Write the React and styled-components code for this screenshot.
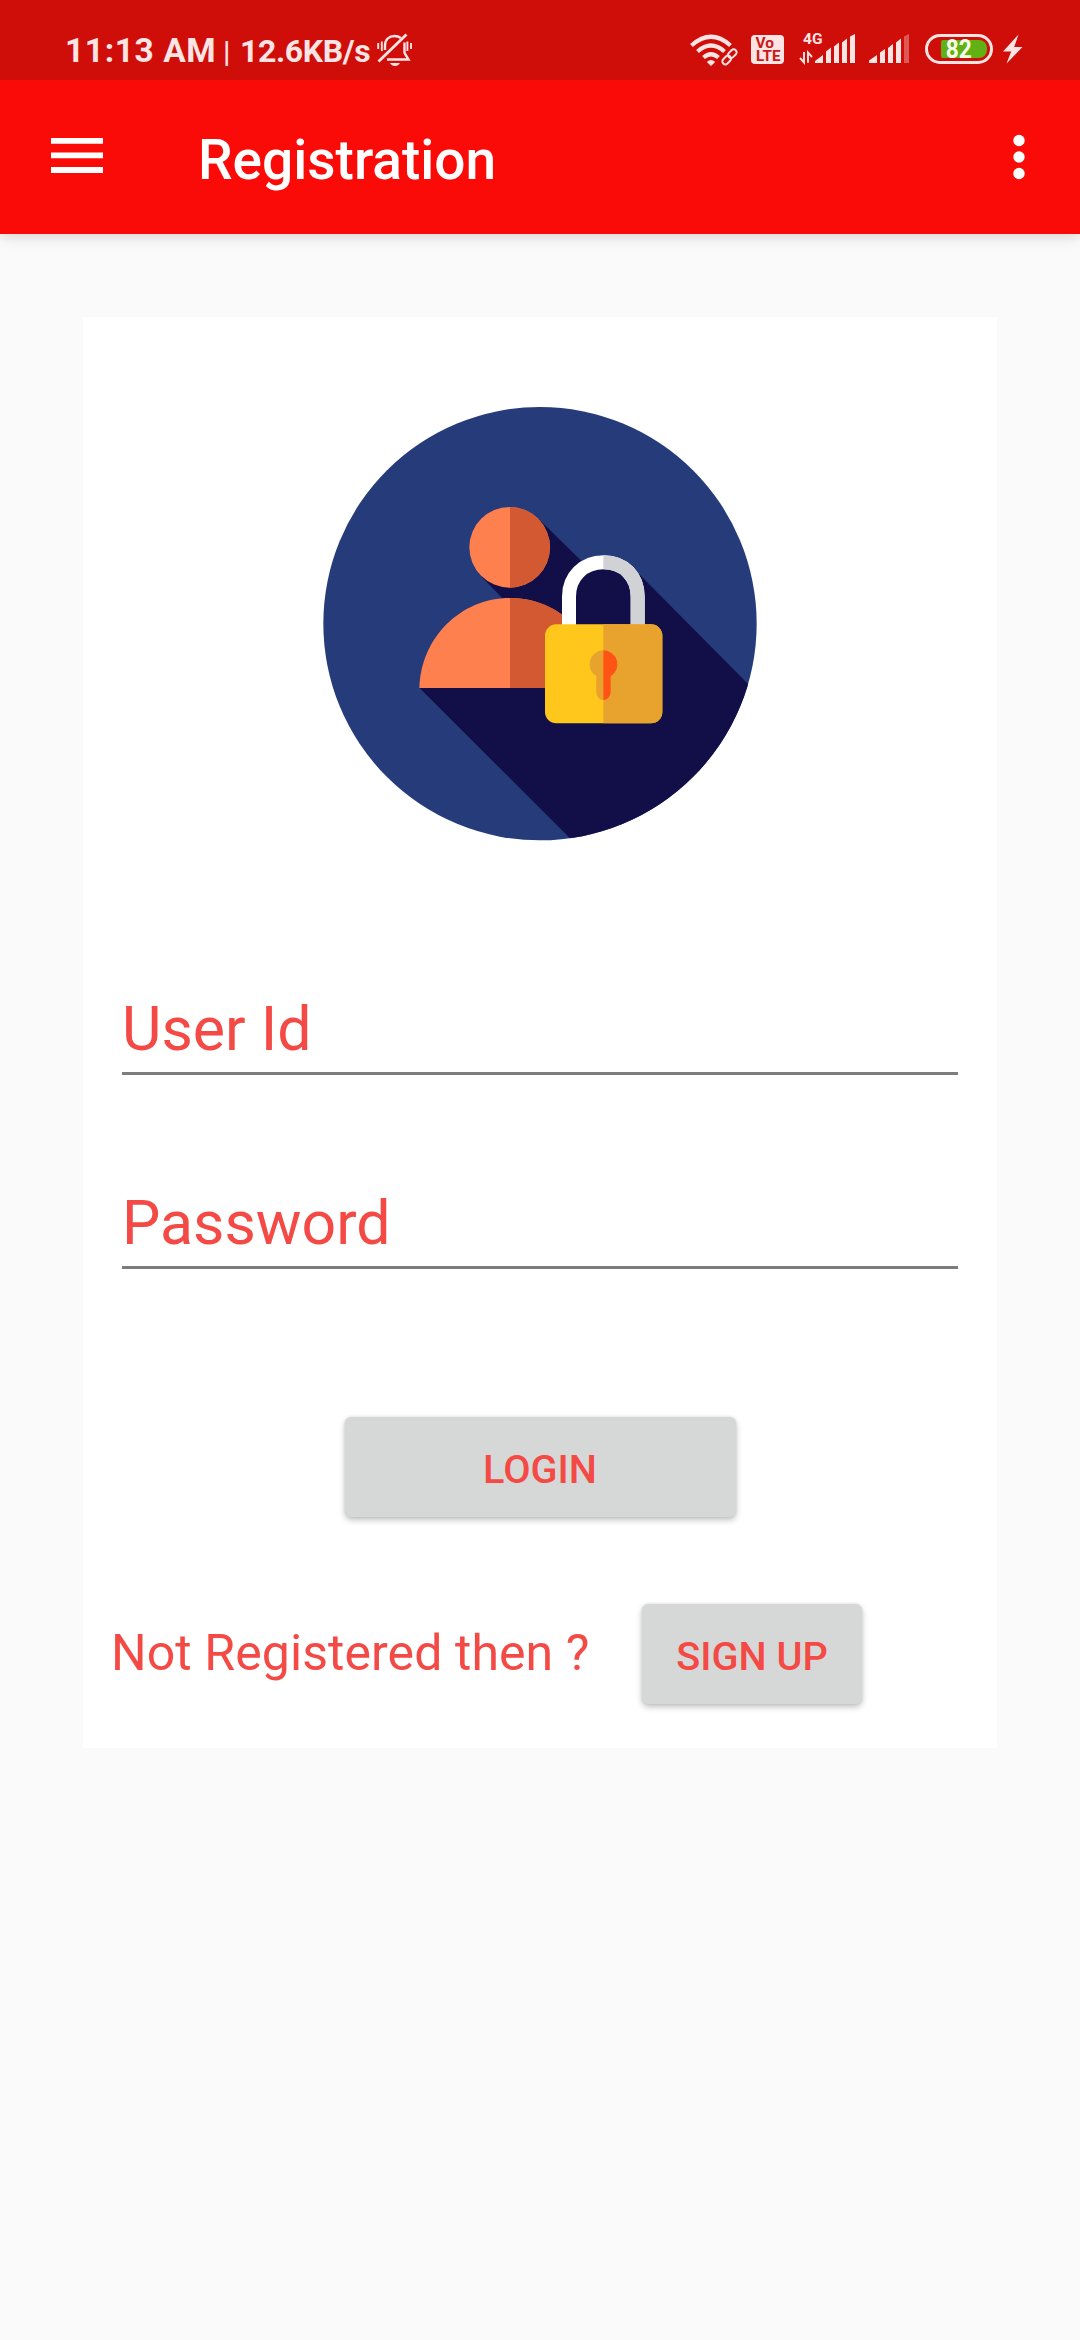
import React from "react";
import styled, { createGlobalStyle } from "styled-components";

const Global = createGlobalStyle`
  * { box-sizing: border-box; }
  html, body { margin: 0; padding: 0; background: #fafafa; }
  body { font-family: Roboto, "Liberation Sans", sans-serif; }
  svg { display: block; flex: none; }
`;

const tint = "#ffe4e4";

const Screen = styled.div`
  width: 1080px;
  height: 2340px;
  display: flex;
  flex-direction: column;
  background: #fafafa;
  overflow: hidden;
`;

const StatusBar = styled.header`
  height: 80px;
  flex: none;
  display: flex;
  justify-content: space-between;
  z-index: 1;
  background: #cf0d09;
  color: ${tint};
`;

const StatusLeft = styled.div`
  display: flex;
  align-items: baseline;
  padding: 31px 0 0 65px;
  height: 80px;
`;

const StatusText = styled.span`
  font-size: ${(p) => p.$size}px;
  font-weight: ${(p) => p.$weight || 700};
  line-height: 40px;
  letter-spacing: ${(p) => p.$track || 0}px;
  width: ${(p) => p.$width}px;
  white-space: nowrap;
`;

const Bell = styled.svg`
  align-self: flex-start;
`;

const StatusIcons = styled.svg`
  width: 400px;
  height: 80px;
`;

const AppBar = styled.nav`
  height: 154px;
  flex: none;
  display: flex;
  align-items: center;
  padding: 0 55px 0 51px;
  background: #fb0b08;
  color: #fff;
  box-shadow: 0 2px 14px rgba(0, 0, 0, 0.16);
`;

const MenuButton = styled.button`
  width: 52px;
  height: 35px;
  margin-bottom: 3px;
  padding: 0;
  border: 0;
  background: none;
  color: inherit;
`;

const Title = styled.h1`
  flex: 1;
  margin: 6px 0 0 95px;
  font-size: 55px;
  font-weight: 500;
  line-height: 64px;
`;

const MoreButton = styled(MenuButton)`
  width: 12px;
  height: 46px;
  margin-bottom: 0;
`;

const Card = styled.main`
  width: 914px;
  height: 1431px;
  flex: none;
  margin: 83px 0 0 83px;
  display: flex;
  flex-direction: column;
  background: #fff;
  color: #f44a45;
`;

const Emblem = styled.svg`
  width: 460px;
  height: 460px;
  margin: 73px auto 0;
`;

const Field = styled.label`
  height: ${(p) => p.$height}px;
  margin: ${(p) => p.$top}px 39px 0;
  border-bottom: 3px solid #7d7d7d;
  font-size: 60.8px;
  line-height: 76px;
`;

const Button = styled.button`
  width: ${(p) => p.$width}px;
  height: 100px;
  padding: 5px 0 0;
  border: 0;
  border-radius: 6px;
  background: #d6d8d7;
  box-shadow: 0 3px 6px rgba(0, 0, 0, 0.24), 0 0 3px rgba(0, 0, 0, 0.1);
  color: inherit;
  font-family: inherit;
  font-size: 39.7px;
  font-weight: 500;
  line-height: 46px;
`;

const LoginRow = styled.div`
  display: flex;
  justify-content: center;
  margin-top: 148px;
`;

const SignUpRow = styled.div`
  display: flex;
  align-items: center;
  margin-top: 87px;
  padding-left: 28px;
`;

const Prompt = styled.span`
  width: 531px;
  font-size: 50px;
  letter-spacing: 0.08px;
  line-height: 58px;
  padding-bottom: 2px;
  white-space: nowrap;
`;

function MutedBell() {
  return (
    <Bell width="40" height="40" viewBox="0 1 40 40" fill="none" stroke={tint} strokeWidth="2.4">
      <path d="M10 20v-4.500C10 9.500 14 6 19.500 6c2.500 0 4.700.8 6.300 2M29.500 12.500V23l4 6.500H12" />
      <path d="M3.500 31.500L31.500 4.500" strokeWidth="2.800" />
      <path d="M15 33h10c-1 2-2.800 3-5 3s-4-1-5-3z" fill={tint} stroke="none" />
      <path d="M3.200 13v6M6.800 11.500v9.500M32.400 11.500v9.500M36 13v6" strokeWidth="1.900" />
    </Bell>
  );
}

function Indicators() {
  return (
    <StatusIcons viewBox="680 0 400 80">
      <g fill="none" stroke={tint} strokeWidth="4.200">
        <path d="M691.500 45.500Q711 28 730.500 45.500" />
        <path d="M697.500 51.500Q711 39.500 724.500 51.500" />
        <path d="M703.500 57.500Q711 51 718.500 57.500" />
      </g>
      <path d="M706.800 62q4.200-4 8.400 0l-4.200 4z" fill={tint} />
      <g fill="none" stroke={tint} strokeWidth="1.900">
        <rect x="-4.900" y="-3" width="9.800" height="6" rx="3" transform="translate(732.300 53.700) rotate(-45)" />
        <rect x="-4.900" y="-3" width="9.800" height="6" rx="3" transform="translate(726.700 60) rotate(-45)" />
      </g>
      <rect x="751" y="35" width="33" height="29" rx="4" fill={tint} />
      <g fill="#c91a18" fontFamily="Roboto, sans-serif" fontWeight="700">
        <text x="755.500" y="47.700" fontSize="14" textLength="18.500" lengthAdjust="spacingAndGlyphs">Vo</text>
        <text x="756" y="61" fontSize="14.500" textLength="24.500" lengthAdjust="spacingAndGlyphs">LTE</text>
      </g>
      <text x="803" y="44" fontSize="15.500" fontWeight="700" fontFamily="Roboto, sans-serif" fill={tint}>4G</text>
      <path d="M804 52v10.500l-4-4.500M808 62.800V52.500l4 4.500" fill="none" stroke={tint} strokeWidth="1.900" />
      <g fill={tint}>
        <path d="M815 63v-2l8-6v8zM826 63V51.500l5-4V63zM834 63V46.500l5-4V63zM842 63V42.500l5-4V63zM850 63V36.500l5-2.500V63z" />
        <path d="M869 63v-2.500l8-5.500v8zM880 63V52.500l5-3.500V63zM888 63V48l5-4V63zM896 63V42.500l5-4V63z" />
        <path d="M904 63V36.500l5-2.500V63z" opacity=".35" />
      </g>
      <rect x="926.500" y="35.500" width="65" height="27" rx="13.500" fill="none" stroke={tint} strokeWidth="3" />
      <path d="M943 40h36a8 8 0 0 1 8 8v2a8 8 0 0 1-8 8h-36a2 2 0 0 1-2-2V42a2 2 0 0 1 2-2z" fill="#62b114" />
      <text x="945.800" y="57.800" fontSize="25" fontWeight="700" fontFamily="Roboto, sans-serif" fill="#f7ffe9" textLength="26" lengthAdjust="spacingAndGlyphs">82</text>
      <path d="M1018.500 34.500L1003 51.500h8.200L1006.500 63.500 1022.500 47h-8.300z" fill={tint} />
    </StatusIcons>
  );
}

function LoginEmblem() {
  return (
    <Emblem viewBox="0 0 1380 1380">
      <defs>
        <clipPath id="disc"><circle cx="690" cy="701" r="650" /></clipPath>
        <clipPath id="rightOfUser"><rect x="600" y="300" width="300" height="700" /></clipPath>
        <clipPath id="rightOfLock"><rect x="880" y="400" width="300" height="700" /></clipPath>
      </defs>
      <circle cx="690" cy="701" r="650" fill="#263b7a" />
      <g clipPath="url(#disc)" fill="#120f48">
        <path d="M686 387L820 518 760 690 620 670 515 560z" />
        <path d="M328 893L780 1345 1380 1380V948L970 535 780 540 700 893z" />
      </g>
      <g fill="#ff804f">
        <circle cx="599" cy="472" r="121" />
        <path d="M328 894C332 745 450 624 600 624S868 745 872 894z" />
      </g>
      <g clipPath="url(#rightOfUser)" fill="#d25932">
        <circle cx="599" cy="472" r="121" />
        <path d="M328 894C332 745 450 624 600 624S868 745 872 894z" />
      </g>
      <path d="M800 708V622Q800 538 880 538T961 622V708z" fill="#120f48" />
      <g fill="none" strokeWidth="42">
        <path d="M777 710V620C777 560 820 517 881 517S983 560 983 620V710" stroke="#fff" />
        <path d="M777 710V620C777 560 820 517 881 517S983 560 983 620V710" stroke="#d0d2d5" clipPath="url(#rightOfLock)" />
      </g>
      <rect x="705" y="703" width="352" height="297" rx="34" fill="#ffc61b" />
      <rect x="705" y="703" width="352" height="297" rx="34" fill="#e8a22e" clipPath="url(#rightOfLock)" />
      <path d="M880 781a42 42 0 0 0-21 78v48a21 23 0 0 0 21 23z" fill="#e8a22e" />
      <path d="M880 781a42 42 0 0 1 22 78v48a22 23 0 0 1-22 23z" fill="#ff5416" />
    </Emblem>
  );
}

export default function App() {
  return (
    <Screen>
      <Global />
      <StatusBar>
        <StatusLeft>
          <StatusText $size={33.5} $width={158} $track={0.6}>11:13 AM</StatusText>
          <StatusText $size={30} $width={17} $weight={500}>|</StatusText>
          <StatusText $size={32} $width={135} $track={-0.4}>12.6KB/s</StatusText>
          <MutedBell />
        </StatusLeft>
        <Indicators />
      </StatusBar>
      <AppBar>
        <MenuButton aria-label="Menu">
          <svg width="52" height="35" viewBox="0 0 52 35" fill="#fff">
            <path d="M0 0h52v5.700H0zM0 14.500h52v5.700H0zM0 29h52v6H0z" />
          </svg>
        </MenuButton>
        <Title>Registration</Title>
        <MoreButton aria-label="More options">
          <svg width="12" height="46" viewBox="0 0 12 46" fill="#fff">
            <circle cx="6" cy="6.500" r="5.700" />
            <circle cx="6" cy="23" r="5.700" />
            <circle cx="6" cy="39.500" r="5.700" />
          </svg>
        </MoreButton>
      </AppBar>
      <Card>
        <LoginEmblem />
        <Field $top={142} $height={83}>User Id</Field>
        <Field $top={111} $height={83}>Password</Field>
        <LoginRow>
          <Button $width={391}>LOGIN</Button>
        </LoginRow>
        <SignUpRow>
          <Prompt>Not Registered then ?</Prompt>
          <Button $width={220}>SIGN UP</Button>
        </SignUpRow>
      </Card>
    </Screen>
  );
}
